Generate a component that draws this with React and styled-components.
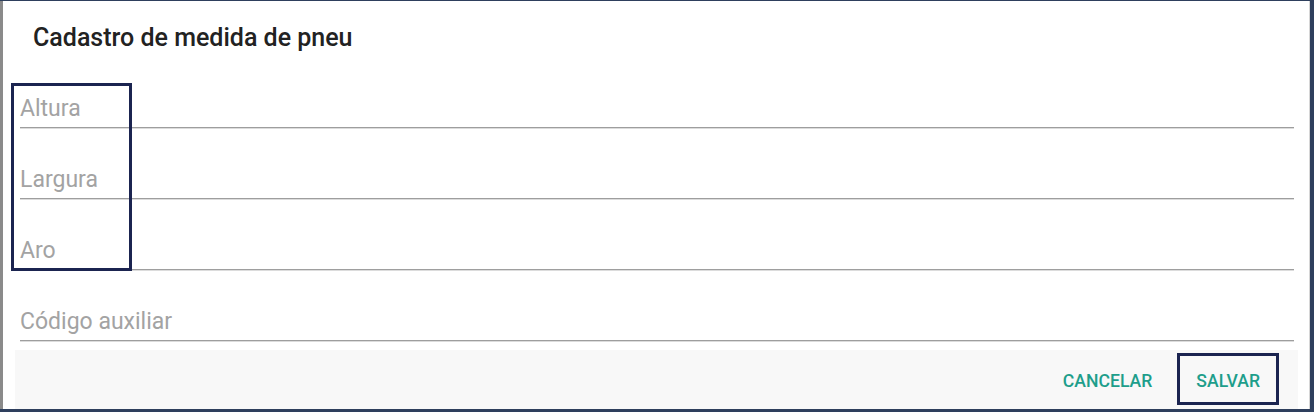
import React from "react";
import styled, { createGlobalStyle } from "styled-components";

const GlobalStyle = createGlobalStyle`
  html, body {
    margin: 0;
    padding: 0;
    background: #2e3f5d;
  }
  body {
    font-family: Roboto, "Noto Sans", Arial, sans-serif;
  }
`;

//
const Backdrop = styled.div`
  width: 1314px;
  height: 412px;
  display: flex;
  align-items: stretch;
  padding: 1px 0 3px 0;
  box-sizing: border-box;
  background: #2e3f5d;
  overflow: hidden;
`;
const SideStrip = styled.div`
  width: 3px;
  flex: none;
  background: #8a8a8a;
`;
const Dialog = styled.div`
  position: relative;
  width: 1306px;
  flex: none;
  display: flex;
  flex-direction: column;
  background: #ffffff;
  box-shadow: 1px 0 0 #d6d6d6;
`;
const Title = styled.h2`
  margin: 0;
  padding: 23px 30px 5px;
  font-size: 25px;
  line-height: 28px;
  font-weight: 500;
  color: #222222;
`;
const Fields = styled.div`
  display: flex;
  flex-direction: column;
  padding: 0 15px 0 17px;
`;
const Field = styled.div`
  padding: 38px 0 4px;
  line-height: 28px;
  font-size: 23px;
  color: #a3a3a3;
  border-bottom: 1px solid #9e9e9e;
  box-shadow: 0 1px 0 #dcdcdc;
`;
const Footer = styled.div`
  margin: 9px 11px 0 12px;
  height: 60px;
  display: flex;
  justify-content: flex-end;
  align-items: flex-start;
  gap: 6px;
  padding: 3px 19px 0 0;
  box-sizing: border-box;
  background: #f8f8f8;
`;
const Button = styled.button`
  height: 52px;
  padding: 3px 16px 0;
  border: 3px solid ${(props) => (props.highlight ? "#1b2450" : "transparent")};
  background: transparent;
  font-family: Roboto, "Noto Sans", Arial, sans-serif;
  font-size: 17.6px;
  font-weight: 500;
  text-transform: uppercase;
  color: #1e9e8b;
  cursor: pointer;
`;
const Marker = styled.div`
  position: absolute;
  left: 8px;
  top: 82px;
  width: 121px;
  height: 188px;
  box-sizing: border-box;
  border: 3px solid #1b2450;
  pointer-events: none;
`;

const fields = ["Altura", "Largura", "Aro", "Código auxiliar"];

//
const App = () => {
  return (
    <>
      <GlobalStyle />
      <Backdrop>
        <SideStrip />
        <Dialog>
          <Title>Cadastro de medida de pneu</Title>
          <Fields>
            {fields.map((label) => (
              <Field key={label}>{label}</Field>
            ))}
          </Fields>
          <Footer>
            <Button>Cancelar</Button>
            <Button highlight>Salvar</Button>
          </Footer>
          <Marker />
        </Dialog>
      </Backdrop>
    </>
  );
};

export default App;
